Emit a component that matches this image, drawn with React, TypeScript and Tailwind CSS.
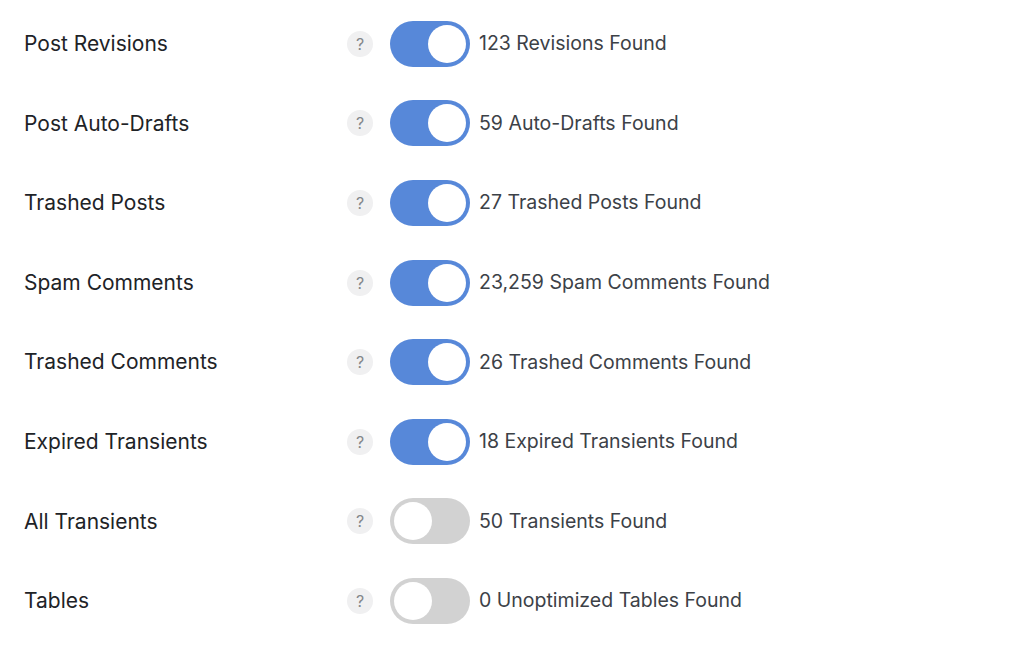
const rows = [
  { label: "Post Revisions", found: "123 Revisions Found", on: true },
  { label: "Post Auto-Drafts", found: "59 Auto-Drafts Found", on: true },
  { label: "Trashed Posts", found: "27 Trashed Posts Found", on: true },
  { label: "Spam Comments", found: "23,259 Spam Comments Found", on: true },
  { label: "Trashed Comments", found: "26 Trashed Comments Found", on: true },
  { label: "Expired Transients", found: "18 Expired Transients Found", on: true },
  { label: "All Transients", found: "50 Transients Found", on: false },
  { label: "Tables", found: "0 Unoptimized Tables Found", on: false },
];

function Toggle({ on }: { on: boolean }) {
  return (
    <div
      className={`flex items-center w-[80px] h-[46px] rounded-full px-[4px] shrink-0 ${
        on ? "bg-[#5788d9] justify-end" : "bg-[#d2d2d2] justify-start"
      }`}
    >
      <span className="block w-[38px] h-[38px] rounded-full bg-white" />
    </div>
  );
}

export default function App() {
  return (
    <div
      className="w-[1024px] h-[647px] bg-white pt-[4px] pl-[24px]"
      style={{ fontFamily: "Inter, 'Noto Sans', sans-serif" }}
    >
      {rows.map((r) => (
        <div key={r.label} className="flex items-center h-[79.6px]">
          <div className="w-[323px] text-[21px] text-[#1e2327]">{r.label}</div>
          <div className="w-[26px] h-[26px] rounded-full bg-[#f0f0f1] text-[#83878b] text-[16px] flex items-center justify-center shrink-0">
            ?
          </div>
          <div className="ml-[17px]">
            <Toggle on={r.on} />
          </div>
          <div className="ml-[9px] text-[19.5px] text-[#3c4147]">{r.found}</div>
        </div>
      ))}
    </div>
  );
}
